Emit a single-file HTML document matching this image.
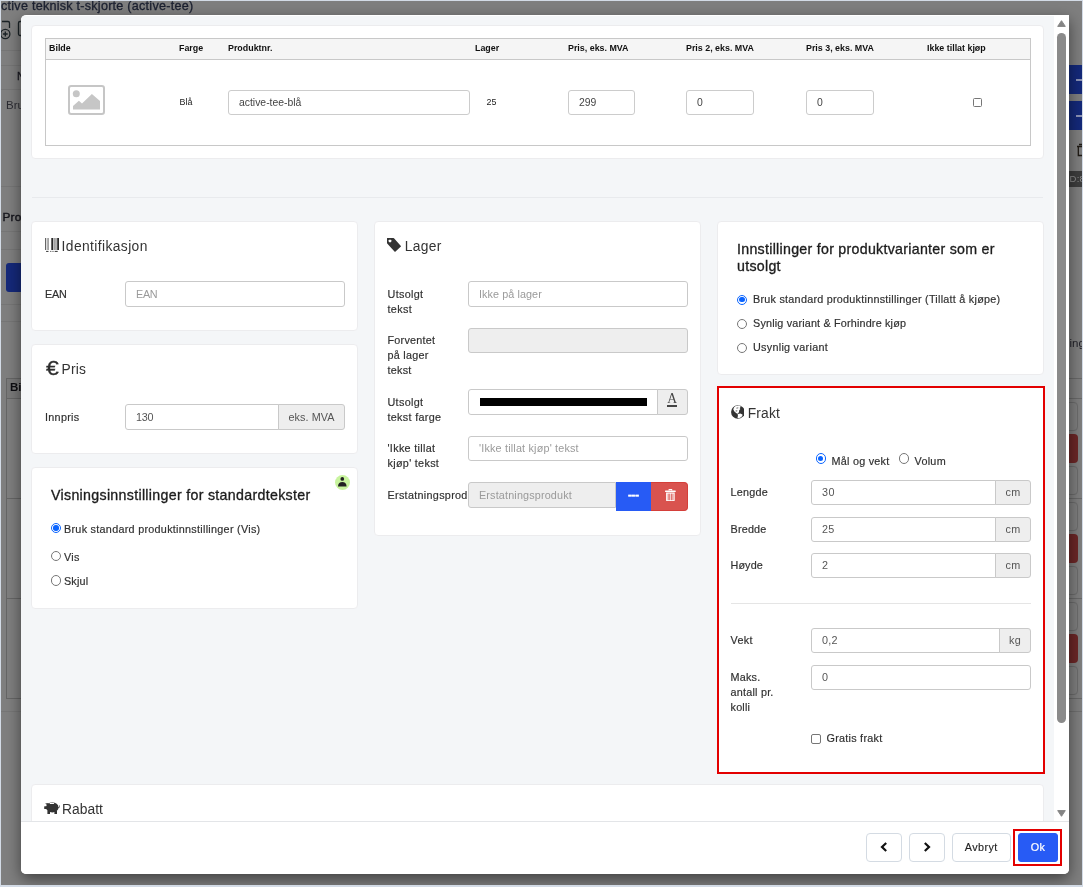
<!DOCTYPE html>
<html lang="no">
<head>
<meta charset="utf-8">
<title>Active teknisk t-skjorte (active-tee)</title>
<style>
*{box-sizing:border-box;margin:0;padding:0}
html,body{width:1083px;height:887px;overflow:hidden}
body{position:relative;background:#7f7f7f;font-family:"Liberation Sans",sans-serif;font-size:11px;color:#333;line-height:1.4}
.abs{position:absolute}
/* ---------- background page (dimmed) ---------- */
#bg{position:absolute;left:0;top:0;width:1083px;height:887px;overflow:hidden;will-change:transform}
#bg .title{position:absolute;left:1px;top:-2.2px;font-size:12.6px;line-height:16px;color:#1b2030;white-space:nowrap;letter-spacing:.25px;-webkit-text-stroke:.3px #1b2030}
#bg .ln{position:absolute;height:1px;background:#767676}
#bg .bt{position:absolute;white-space:nowrap;line-height:14px;color:#1a1a22}
#bg .bx{position:absolute;left:1050px;width:28px;height:29px;border:1px solid #6c6c6c;border-radius:4px}
#bg .rb{position:absolute;left:1050px;width:28px;height:29px;border-radius:4px;background:#6c2727}
#frame{position:absolute;left:0;top:0;width:1083px;height:887px;border:1px solid #d3dbe6;border-bottom-width:2px;pointer-events:none;z-index:50}
/* ---------- modal ---------- */
#modal{position:absolute;left:21px;top:15px;width:1048px;height:859px;background:#fff;border-radius:5px 0 5px 5px;box-shadow:0 5px 15px rgba(0,0,0,.5);overflow:hidden}
#mbody{position:absolute;left:0;top:1px;width:1033px;height:805px;background:#f4f6f8;overflow:hidden}
#pc{position:absolute;left:-21px;top:-16px;width:1083px;height:887px;will-change:transform}
#sbar{position:absolute;left:1033px;top:0;width:15px;height:806px;background:#fff}
#sbar .th{position:absolute;left:3px;top:18px;width:9px;height:689.5px;border-radius:4.5px;background:#8a8a8a}
#mfoot{will-change:transform;position:absolute;left:0;top:806px;width:1048px;height:53px;background:#fff;border-top:1px solid #e3e5e8}
.card{position:absolute;background:#fff;border:1px solid #ececee;border-radius:4px}
.h{position:absolute;font-size:13.8px;line-height:20px;letter-spacing:.2px;color:#333;white-space:nowrap}
.h2{position:absolute;font-size:14.2px;line-height:16.5px;letter-spacing:.25px;color:#1c1c1c;white-space:nowrap;-webkit-text-stroke:.32px #1c1c1c}
.lbl{position:absolute;font-size:10.8px;line-height:15px;letter-spacing:.22px;color:#303030;white-space:nowrap;-webkit-text-stroke:.18px #303030}
.inp{position:absolute;height:26px;border:1px solid #c9c9c9;border-radius:3px;background:#fff;font-size:10.8px;letter-spacing:.15px;color:#555;line-height:24px;padding-left:10px;white-space:nowrap;overflow:hidden}
.inp.ph{color:#9a9a9a}
.inp.dis{background:#eee}
.inp.l{border-radius:3px 0 0 3px}
.add{position:absolute;height:26px;border:1px solid #c9c9c9;border-radius:0 3px 3px 0;background:#eee;font-size:10.8px;letter-spacing:.15px;color:#555;line-height:24px;text-align:center;white-space:nowrap}
.rad{position:absolute;width:10.4px;height:10.4px;border:1px solid #767676;border-radius:50%;background:#fff}
.rad.on{border-color:#0a64ff}
.rad.on:after{content:"";position:absolute;left:1.5px;top:1.5px;width:5.4px;height:5.4px;border-radius:50%;background:#0a64ff}
.chk{position:absolute;width:10px;height:10px;border:1px solid #767676;border-radius:2px;background:#fff}
.btn{position:absolute;height:29px;border:1px solid #d4dbe3;border-radius:4px;background:#fff;font-size:10.8px;letter-spacing:.2px;color:#222;line-height:27px;text-align:center;-webkit-text-stroke:.12px #222}
/* table */
#tbl{position:absolute;left:24px;top:23px;width:986px;height:108px;border:1px solid #c8c8c8;background:#fff}
#tbl .hd{position:absolute;left:0;top:0;width:984px;height:21px;background:#f5f5f5;border-bottom:1px solid #c8c8c8}
#tbl .th{position:absolute;top:3px;font-size:8.9px;font-weight:bold;color:#111;white-space:nowrap}
#tbl .td{position:absolute;font-size:8.9px;color:#222;white-space:nowrap}
#tbl .ti{position:absolute;top:29px;height:25px;border:1px solid #ccc;border-radius:3px;background:#fff;font-size:10.4px;color:#444;line-height:23px;padding-left:10px}
</style>
</head>
<body>
<div id="bg">
  <div class="title">ctive teknisk t-skjorte (active-tee)</div>
  <!-- left strip (dimmed page behind the modal) -->
  <div class="ln" style="left:1px;top:50px;width:25px"></div>
  <div class="ln" style="left:1px;top:65px;width:25px"></div>
  <div class="ln" style="left:1px;top:89px;width:25px"></div>
  <div class="ln" style="left:1px;top:186px;width:25px"></div>
  <div class="ln" style="left:1px;top:231px;width:25px"></div>
  <div class="ln" style="left:1px;top:249px;width:25px"></div>
  <div class="ln" style="left:1px;top:304px;width:25px"></div>
  <div class="ln" style="left:1px;top:321px;width:25px"></div>
  <div class="ln" style="left:1px;top:711px;width:25px"></div>
  <svg class="abs" style="left:1.3px;top:15px" width="22" height="30" viewBox="0 0 22 30"><g fill="none" stroke="#1a2226" stroke-width="1.3"><path d="M1 6.5 H7 Q8.5 6.5 8.5 8 V13"/><circle cx="4.3" cy="19" r="4.6"/><path d="M4.3 16.6 V21.4 M1.9 19 H6.7"/><path d="M21 6.5 H19 Q17.5 6.5 17.5 8 V19 Q17.5 20.5 19 20.5 H21"/></g></svg>
  <div class="bt" style="left:17px;top:69px;font-size:11px;-webkit-text-stroke:.3px #1a1a22">N</div>
  <div class="bt" style="left:6px;top:98px;font-size:11.5px;color:#2c2c33">Bruk</div>
  <div class="bt" style="left:2.5px;top:210px;font-size:11.8px;color:#15151c;-webkit-text-stroke:.4px #15151c;letter-spacing:.2px">Prod</div>
  <div class="abs" style="left:6px;top:263px;width:40px;height:29px;border-radius:3px;background:#15297a"></div>
  <div class="abs" style="left:6px;top:378px;width:40px;height:321px;border:1px solid #666;border-right:0"></div>
  <div class="abs" style="left:7px;top:379px;width:30px;height:19px;background:#7a7a7a"></div>
  <div class="ln" style="left:7px;top:398px;width:25px;background:#666"></div>
  <div class="ln" style="left:7px;top:498px;width:25px;background:#666"></div>
  <div class="ln" style="left:7px;top:598px;width:25px;background:#666"></div>
  <div class="bt" style="left:10px;top:380px;font-size:11.5px;font-weight:bold;color:#0e0e12">Bil</div>
  <!-- right strip -->
  <div class="abs" style="left:1069px;top:65px;width:14px;height:29px;background:#14297a"></div>
  <div class="abs" style="left:1069px;top:101px;width:14px;height:29px;background:#14297a"></div>
  <div class="abs" style="left:1076px;top:79px;width:6px;height:2px;background:#8c93b5"></div>
  <div class="abs" style="left:1076px;top:115px;width:6px;height:2px;background:#8c93b5"></div>
  <svg class="abs" style="left:1076px;top:143px" width="7" height="14" viewBox="0 0 7 14"><path d="M3 1.5 H7 M1 3.5 H7 M2.3 3.5 V12.5 H7" fill="none" stroke="#1f1a14" stroke-width="1.3"/></svg>
  <div class="abs" style="left:1069px;top:171px;width:14px;height:16px;background:#3d3d3d"></div>
  <div class="bt" style="left:1069.5px;top:172px;font-size:9.5px;color:#8f8f8f;letter-spacing:.3px">D:8</div>
  <div class="bt" style="left:1069.5px;top:336px;font-size:11.5px;color:#23232a">ing</div>
  <div class="ln" style="left:1062px;top:378px;width:20px;background:#696969"></div>
  <div class="ln" style="left:1062px;top:398px;width:20px;background:#696969"></div>
  <div class="ln" style="left:1062px;top:498px;width:20px;background:#696969"></div>
  <div class="ln" style="left:1062px;top:598px;width:20px;background:#696969"></div>
  <div class="ln" style="left:1062px;top:698px;width:20px;background:#696969"></div>
  <div class="ln" style="left:1062px;top:711px;width:20px;background:#6f6f6f"></div>
  <div class="bx" style="top:402px"></div><div class="rb" style="top:434px"></div><div class="bx" style="top:466px"></div>
  <div class="bx" style="top:502px"></div><div class="rb" style="top:534px"></div><div class="bx" style="top:566px"></div>
  <div class="bx" style="top:602px"></div><div class="rb" style="top:634px"></div><div class="bx" style="top:666px"></div>
</div>

<div id="modal">
  <div id="mbody"><div id="pc">
    <!-- top table card -->
    <div class="card" style="left:31px;top:25px;width:1013px;height:134px"></div>
    <div id="tbl" style="left:45px;top:38px">
      <div class="hd"></div>
      <div class="th" style="left:3px">Bilde</div>
      <div class="th" style="left:133px">Farge</div>
      <div class="th" style="left:182px">Produktnr.</div>
      <div class="th" style="left:429px">Lager</div>
      <div class="th" style="left:522px">Pris, eks. MVA</div>
      <div class="th" style="left:640px">Pris 2, eks. MVA</div>
      <div class="th" style="left:760px">Pris 3, eks. MVA</div>
      <div class="th" style="left:881px">Ikke tillat kjøp</div>
      <svg class="abs" style="left:22px;top:46.3px" width="37" height="30" viewBox="0 0 37 30"><rect x="1" y="1" width="35" height="28" rx="2.2" fill="#fff" stroke="#c6c6c6" stroke-width="2"/><circle cx="8.3" cy="8.7" r="3.5" fill="#c6c6c6"/><path d="M5 24.6 L5 21 L10.9 15.7 L14 18.5 L23.9 8.9 L32 16 L32 24.6 Z" fill="#c6c6c6"/></svg>
      <div class="td" style="left:133.5px;top:57px">Blå</div>
      <div class="ti" style="left:182px;top:51px;width:242px">active-tee-blå</div>
      <div class="td" style="left:440.5px;top:57px">25</div>
      <div class="ti" style="left:522px;top:51px;width:67px">299</div>
      <div class="ti" style="left:640px;top:51px;width:68px">0</div>
      <div class="ti" style="left:760px;top:51px;width:68px">0</div>
      <div class="chk" style="left:926.5px;top:58.5px;width:9px;height:9px;border-radius:1.5px"></div>
    </div>
    <div class="abs" style="left:32px;top:197px;width:1011px;height:1px;background:#e8eaed"></div>

<!--COL1-->
    <div class="card" style="left:31px;top:221px;width:327px;height:110px"></div>
    <svg class="abs" style="left:44.7px;top:238px" width="14.4" height="14" viewBox="0 0 14.4 14"><rect x="0.1" y="0" width="1.1" height="12" fill="#555"/><rect x="2.5" y="0" width="1.1" height="12" fill="#666"/><rect x="6.3" y="0" width="2" height="12" fill="#2a2a2a"/><rect x="9.4" y="0" width="1.1" height="12" fill="#666"/><rect x="10.8" y="0" width="1.1" height="12" fill="#aaa"/><rect x="12.2" y="0" width="2" height="12" fill="#2a2a2a"/><g fill="#333"><rect x="1.1" y="12.9" width="2.4" height="1"/><rect x="5.3" y="12.9" width="1" height="1"/><rect x="7.5" y="12.9" width="1" height="1"/><rect x="9.7" y="12.9" width="3" height="1"/></g></svg>
    <div class="h" style="left:61.6px;top:236.67px;letter-spacing:0.402px">Identifikasjon</div>
    <div class="lbl" style="left:45px;top:286.56px;letter-spacing:-0.184px">EAN</div>
    <div class="inp ph" style="left:125px;top:281px;width:220px;height:26px;line-height:24px;letter-spacing:-0.318px">EAN</div>
    <div class="card" style="left:31px;top:344px;width:327px;height:110px"></div>
    <div class="abs" style="left:46.3px;top:357px;font-size:20.2px;color:#2e2e2e;-webkit-text-stroke:.3px #2e2e2e;line-height:22px;transform:scaleX(1.14);transform-origin:0 0">€</div>
    <div class="h" style="left:61.6px;top:360.17px;letter-spacing:0.21px">Pris</div>
    <div class="lbl" style="left:45px;top:410.06px;letter-spacing:0.293px">Innpris</div>
    <div class="inp l" style="left:125px;top:404px;width:154px;height:26px;line-height:24px;letter-spacing:-0.271px">130</div>
    <div class="add" style="left:278px;top:404px;width:67px;height:26px;line-height:24px;letter-spacing:0.098px">eks. MVA</div>
    <div class="card" style="left:31px;top:467px;width:327px;height:142px"></div>
    <div class="abs" style="left:334.9px;top:474.7px;width:15.4px;height:15.4px;border-radius:50%;background:#c8f49e"></div><svg class="abs" style="left:338.3px;top:477.2px" width="8.6" height="9.6" viewBox="0 0 8.6 9.6"><circle cx="4.3" cy="1.9" r="1.85" fill="#222"/><path d="M0 9.4 C0 6.4 1.9 5 4.3 5 C6.7 5 8.6 6.4 8.6 9.4 Z" fill="#222"/></svg>
    <div class="h2" style="left:51px;top:487.03px;letter-spacing:0.314px">Visningsinnstillinger for standardtekster</div>
    <div class="rad on" style="left:50.7px;top:522.9px"></div>
    <div class="lbl" style="left:64px;top:522.46px;letter-spacing:0.28px">Bruk standard produktinnstillinger (Vis)</div>
    <div class="rad" style="left:50.7px;top:550.8px"></div>
    <div class="lbl" style="left:64px;top:550.26px;letter-spacing:0.31px">Vis</div>
    <div class="rad" style="left:50.7px;top:575.4px"></div>
    <div class="lbl" style="left:64px;top:573.86px;letter-spacing:0.172px">Skjul</div>
<!--/COL1-->
<!--COL2-->
    <div class="card" style="left:374px;top:221px;width:327px;height:315px"></div>
    <svg class="abs" style="left:387.3px;top:238px" width="14.4" height="14.2" viewBox="0 0 14.4 14.2"><path d="M0 0.3 Q0 0 0.3 0 L6.4 0 Q6.7 0 7 0.3 L13.9 8 Q14.2 8.3 13.9 8.6 L8.3 13.7 Q8 14 7.7 13.7 L0.2 5.5 Q0 5.3 0 5 Z" fill="#333"/><rect x="1.7" y="1.7" width="2.6" height="2.5" rx="0.6" fill="#fff"/></svg>
    <div class="h" style="left:404.8px;top:236.67px;letter-spacing:0.311px">Lager</div>
    <div class="lbl" style="left:387.5px;top:286.96px;letter-spacing:0.336px">Utsolgt<br>tekst</div>
    <div class="inp ph" style="left:468px;top:281px;width:220px;height:26px;line-height:24px;letter-spacing:0.079px">Ikke på lager</div>
    <div class="lbl" style="left:387.5px;top:333.26px;letter-spacing:0.251px">Forventet<br>på lager<br>tekst</div>
    <div class="inp dis" style="left:468px;top:328px;width:220px;height:25px;line-height:23px;letter-spacing:0px"></div>
    <div class="lbl" style="left:387.5px;top:395.16px;letter-spacing:0.31px">Utsolgt<br>tekst farge</div>
    <div class="inp l" style="left:468px;top:389px;width:190px;height:26px;line-height:24px;letter-spacing:0px"></div>
    <div class="abs" style="left:480px;top:398px;width:167px;height:8px;background:#000"></div>
    <div class="add" style="left:657px;top:389px;width:31px;height:26px;line-height:24px;letter-spacing:0px"></div>
    <div class="abs" style="left:667px;top:391.3px;width:10.4px;text-align:center;font-family:'Liberation Serif',serif;font-size:13.6px;line-height:16px;color:#444">A</div>
    <div class="abs" style="left:667px;top:405.3px;width:10.3px;height:1.4px;background:#444"></div>
    <div class="lbl" style="left:387.5px;top:441.36px;letter-spacing:0.308px">'Ikke tillat<br>kjøp' tekst</div>
    <div class="inp ph" style="left:468px;top:436px;width:220px;height:25px;line-height:23px;letter-spacing:0.187px">'Ikke tillat kjøp' tekst</div>
    <div class="lbl" style="left:387.5px;top:488.36px;letter-spacing:0.304px">Erstatningsprodukt</div>
    <div class="inp ph dis l" style="left:468px;top:482px;width:148px;height:26px;line-height:24px;letter-spacing:0.161px">Erstatningsprodukt</div>
    <div class="abs" style="left:616px;top:482px;width:35px;height:29px;background:#275bf5;color:#fff;font-weight:bold;font-size:11.5px;line-height:25.5px;text-align:center;letter-spacing:-.1px;-webkit-text-stroke:.5px #fff">---</div>
    <div class="abs" style="left:651px;top:482px;width:37px;height:29px;background:#d9534f;border:1px solid #d43f3a;border-left:0;border-radius:0 4px 4px 0"></div>
    <svg class="abs" style="left:665px;top:488.8px" width="10.8" height="12.4" viewBox="0 0 10.8 12.4"><g fill="#fff"><path d="M3.6 0 H7.2 V1.6 H6.2 V0.9 H4.6 V1.6 H3.6 Z"/><rect x="0" y="1.6" width="10.8" height="1.3" rx="0.4"/><path d="M1.1 3.6 H9.7 V11.2 Q9.7 12.4 8.5 12.4 H2.3 Q1.1 12.4 1.1 11.2 Z"/></g><g fill="#d9534f"><rect x="2.7" y="4.6" width="0.9" height="6.6"/><rect x="4.3" y="4.6" width="0.9" height="6.6"/><rect x="5.9" y="4.6" width="0.9" height="6.6"/><rect x="7.5" y="4.6" width="0.9" height="6.6"/></g></svg>
<!--/COL2-->
<!--COL3-->
    <div class="card" style="left:717px;top:221px;width:327px;height:154px"></div>
    <div class="h2" style="left:737px;top:241.13px;letter-spacing:0.287px">Innstillinger for produktvarianter som er<br>utsolgt</div>
    <div class="rad on" style="left:736.7px;top:294.6px"></div>
    <div class="lbl" style="left:753px;top:292.26px;letter-spacing:0.252px">Bruk standard produktinnstillinger (Tillatt å kjøpe)</div>
    <div class="rad" style="left:736.7px;top:318.7px"></div>
    <div class="lbl" style="left:753px;top:316.16px;letter-spacing:0.177px">Synlig variant &amp; Forhindre kjøp</div>
    <div class="rad" style="left:736.7px;top:342.90000000000003px"></div>
    <div class="lbl" style="left:753px;top:340.06px;letter-spacing:0.278px">Usynlig variant</div>
    <div class="abs" style="left:717px;top:386px;width:328px;height:388px;background:#fff;border:2px solid #e30000"></div>
    <svg class="abs" style="left:730.5px;top:405px" width="13.8" height="14" viewBox="0 0 13.8 14"><circle cx="6.9" cy="7" r="6.85" fill="#333"/><path d="M2.9 2.4 L4.6 0.9 L8.2 0.5 L9.9 1.7 L8.6 3 L9.4 3.9 L8.2 5.2 L8 7 L7 8.8 L5.4 8.2 L3.4 6.6 L2.3 4.6 Z" fill="#fff"/><path d="M6.6 9.3 L9.2 8.6 L11.5 9.6 L11.3 10.9 L9.6 12.5 L7.8 13.2 L6.3 12.5 L7 11 Z" fill="#fff"/><path d="M5.4 2.7 L7.4 2.4 L7.2 3.2 L5.4 3.5 Z M4.6 5.6 L6.4 5.4 L6.2 6.2 L4.8 6.4 Z" fill="#444"/></svg>
    <div class="h" style="left:747.7px;top:403.67px;letter-spacing:0.202px">Frakt</div>
    <div class="rad on" style="left:815.6px;top:453.3px"></div>
    <div class="lbl" style="left:831.5px;top:453.56px;letter-spacing:0.256px">Mål og vekt</div>
    <div class="rad" style="left:899px;top:453.3px"></div>
    <div class="lbl" style="left:914.5px;top:453.56px;letter-spacing:0.284px">Volum</div>
    <div class="lbl" style="left:730.5px;top:485.16px;letter-spacing:0.245px">Lengde</div>
    <div class="inp l" style="left:811px;top:480px;width:185px;height:25px;line-height:23px;letter-spacing:0.484px">30</div>
    <div class="add" style="left:995px;top:480px;width:36px;height:25px;line-height:23px;letter-spacing:0.32px">cm</div>
    <div class="lbl" style="left:730.5px;top:522.16px;letter-spacing:0.196px">Bredde</div>
    <div class="inp l" style="left:811px;top:517px;width:185px;height:25px;line-height:23px;letter-spacing:0.32px">25</div>
    <div class="add" style="left:995px;top:517px;width:36px;height:25px;line-height:23px;letter-spacing:0.32px">cm</div>
    <div class="lbl" style="left:730.5px;top:558.16px;letter-spacing:0.112px">Høyde</div>
    <div class="inp l" style="left:811px;top:553px;width:185px;height:25px;line-height:23px;letter-spacing:0px">2</div>
    <div class="add" style="left:995px;top:553px;width:36px;height:25px;line-height:23px;letter-spacing:0.32px">cm</div>
    <div class="abs" style="left:730.5px;top:603px;width:300.5px;height:1px;background:#e5e5e5"></div>
    <div class="lbl" style="left:730.5px;top:633.16px;letter-spacing:0.362px">Vekt</div>
    <div class="inp l" style="left:811px;top:628px;width:189px;height:25px;line-height:23px;letter-spacing:0.203px">0,2</div>
    <div class="add" style="left:999px;top:628px;width:32px;height:25px;line-height:23px;letter-spacing:0.219px">kg</div>
    <div class="lbl" style="left:730.5px;top:670.16px;letter-spacing:0.227px">Maks.<br>antall pr.<br>kolli</div>
    <div class="inp " style="left:811px;top:665px;width:220px;height:25px;line-height:23px;letter-spacing:0px">0</div>
    <div class="chk" style="left:811px;top:734px"></div>
    <div class="lbl" style="left:826.5px;top:730.76px;letter-spacing:0.261px">Gratis frakt</div>
<!--/COL3-->
<!--RABATT-->
    <div class="card" style="left:31px;top:784px;width:1013px;height:80px"></div>
    <svg class="abs" style="left:43.6px;top:801.7px" width="16.6" height="12.2" viewBox="0 0 16.6 12.2"><g fill="#333"><ellipse cx="8.3" cy="5.4" rx="6.2" ry="5"/><rect x="0.2" y="4.3" width="3" height="2.7" rx="0.5"/><path d="M1.2 1.4 L4.8 1 L3.6 3.4 Z"/><rect x="3.4" y="8.6" width="2.6" height="3.5"/><rect x="10.4" y="8.6" width="2.6" height="3.5"/></g><path d="M14 5.8 C15.4 5.8 16.1 4.8 16 3.2" fill="none" stroke="#333" stroke-width="0.9"/><rect x="5.6" y="0.9" width="4.6" height="1.1" rx="0.55" fill="#fff"/></svg>
    <div class="h" style="left:61.9px;top:799.57px;letter-spacing:0.082px">Rabatt</div>
<!--/RABATT-->
  </div></div>
  <div id="sbar"><svg class="abs" style="left:3px;top:5px" width="9" height="7" viewBox="0 0 9 7"><path d="M0.7 6.4 L4.5 0.7 L8.3 6.4 Z" fill="#858585" stroke="#858585" stroke-width="1" stroke-linejoin="round"/></svg><div class="th"></div><svg class="abs" style="left:3px;top:795px" width="9" height="7" viewBox="0 0 9 7"><path d="M0.7 0.6 L4.5 6.3 L8.3 0.6 Z" fill="#858585" stroke="#858585" stroke-width="1" stroke-linejoin="round"/></svg></div>
  <div id="mfoot">
<!--FOOT-->
    <div class="btn" style="left:845px;top:11px;width:35.5px"><svg width="8" height="10" viewBox="0 0 8 10" style="vertical-align:-1px"><path d="M6.2 1 L2 5 L6.2 9" fill="none" stroke="#111" stroke-width="2.2"/></svg></div>
    <div class="btn" style="left:888px;top:11px;width:35.5px"><svg width="8" height="10" viewBox="0 0 8 10" style="vertical-align:-1px"><path d="M1.8 1 L6 5 L1.8 9" fill="none" stroke="#111" stroke-width="2.2"/></svg></div>
    <div class="btn" style="left:931px;top:11px;width:58.5px;letter-spacing:.4px">Avbryt</div>
    <div class="abs" style="left:992px;top:7px;width:49px;height:37px;border:2px solid #e30000"></div>
    <div class="btn" style="left:997px;top:11px;width:40px;border-radius:3px;background:#275bf5;border-color:#275bf5;color:#fff;-webkit-text-stroke:.2px #fff;letter-spacing:.3px">Ok</div>
<!--/FOOT-->
  </div>
</div>
<div id="frame"></div>
</body>
</html>
